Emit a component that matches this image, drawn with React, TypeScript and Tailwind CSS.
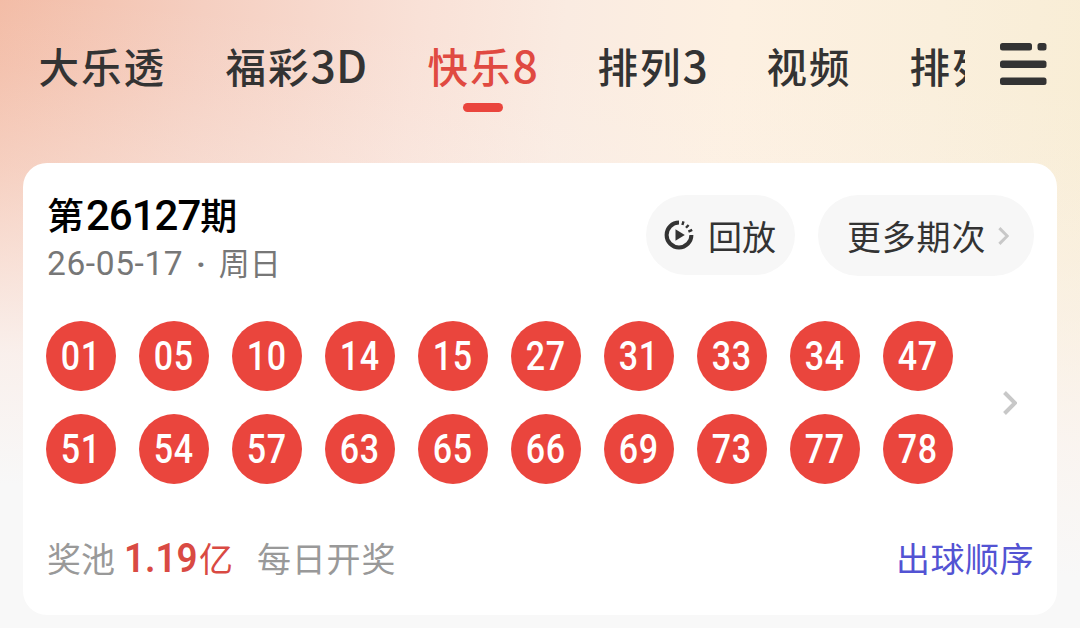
import type { ReactNode } from 'react';

const TABS: { cn: string; latin?: string; width: string; active?: boolean }[] = [
  { cn: '大乐透', width: 'w-[187px]' },
  { cn: '福彩', latin: '3D', width: 'w-[202px]' },
  { cn: '快乐', latin: '8', width: 'w-[170px]', active: true },
  { cn: '排列', latin: '3', width: 'w-[169px]' },
  { cn: '视频', width: 'w-[143px]' },
  { cn: '排列', latin: '5', width: 'w-[170px]' },
];

const ROWS = [
  ['01', '05', '10', '14', '15', '27', '31', '33', '34', '47'],
  ['51', '54', '57', '63', '65', '66', '69', '73', '77', '78'],
];

const MenuIcon = () => (
  <svg width="48" height="44" viewBox="0 0 48 44" fill="#333333">
    <rect x="0" y="0" width="32" height="7.5" rx="2.5" />
    <rect x="37.5" y="0" width="9" height="7.5" rx="2.5" />
    <rect x="0" y="17.5" width="46.5" height="7.5" rx="2.5" />
    <rect x="0" y="34.5" width="46.5" height="7.5" rx="2.5" />
  </svg>
);

const ReplayIcon = () => (
  <svg width="30" height="30" viewBox="0 0 30 30" fill="none" stroke="#333333">
    <path d="M15 2.6A12.4 12.4 0 1 0 27.4 15" strokeWidth="4" />
    <path d="M18.4 5L19.5 1.4M22 7.8L24.6 5M24.4 11.6L28.2 9.8" strokeWidth="2.4" />
    <path d="M11.5 9.2V20.8L20.8 15Z" fill="#333333" stroke="none" />
  </svg>
);

const Chevron = ({ className }: { className: string }) => (
  <svg className={className} viewBox="0 0 14 24" fill="none" stroke="#c8c8c8" strokeWidth="4">
    <path d="M1.5 1.5L12 12L1.5 22.5" />
  </svg>
);

const Ball = ({ children }: { children: ReactNode }) => (
  <span className="flex size-[70px] items-center justify-center rounded-full bg-[#ea453d] font-['Roboto',sans-serif] text-[40.5px] leading-none font-medium text-white">
    <span className="scale-x-[0.84] tracking-[0.8px]">{children}</span>
  </span>
);

const Header = () => (
  <header className="flex h-[163px] items-start">
    <nav className="flex h-full w-[965px] shrink-0 overflow-hidden pl-[38.5px]">
      {TABS.map((tab, i) => (
        <button
          key={i}
          className={`flex shrink-0 flex-col items-start pt-9 ${tab.width} ${
            tab.active ? 'text-[#e04a41]' : 'text-[#333333]'
          }`}
        >
          <span className="flex flex-col items-center">
            <span className="flex h-[60px] items-baseline text-[40.5px] leading-[60px] font-medium tracking-[2px] whitespace-nowrap">
              {tab.cn}
              {tab.latin && <span className="text-[44.5px] leading-none tracking-[0.2px]">{tab.latin}</span>}
            </span>
            {tab.active && <span className="mt-[7px] h-[9px] w-10 rounded-full bg-[#ea453d]" />}
          </span>
        </button>
      ))}
    </nav>
    <button className="mt-[43px] ml-[35px]">
      <MenuIcon />
    </button>
  </header>
);

const App = () => {
  return (
    <div className="h-[628px] w-[1080px] overflow-hidden bg-[#f8f8f8] bg-[linear-gradient(185deg,rgba(251,244,241,0)_12%,rgba(251,244,241,0.1)_22%,rgba(251,244,241,0.33)_36%,rgba(251,244,241,0.6)_48%,rgba(250,245,243,0.9)_62%,#f8f8f8_80%),linear-gradient(95deg,#f3bca6_0%,#f5cfc1_18%,#f9e1d7_37%,#faebe1_50%,#fdf0e1_65%,#faefdc_83%,#f8edd4_100%)] font-['Noto_Sans_CJK_SC',sans-serif]">
      <Header />
      <main className="mx-[23px] flex h-[452px] flex-col rounded-[24px] bg-white px-[23px]">
        <div className="flex h-[158px] items-start pt-8">
          <div className="flex-1 pl-px">
            <h1 className="flex h-[41px] items-baseline text-[37px] leading-[37px] font-medium text-black">
              第
              <span className="ml-[2px] font-['Roboto',sans-serif] text-[42px] leading-none tracking-[-1px]">
                26127
              </span>
              期
            </h1>
            <p className="mt-[9px] flex h-9 items-baseline text-[31px] leading-[34px] text-[#777777]">
              <span className="font-['Roboto',sans-serif] text-[33.5px] leading-none tracking-[0.6px]">26-05-17</span>
              <span className="mx-[13px] font-['Roboto',sans-serif] leading-none font-bold">·</span>
              周日
            </p>
          </div>
          <button className="flex h-20 w-[149px] items-center rounded-full bg-[#f7f7f7] pl-[18px] text-[34px] text-[#333333]">
            <ReplayIcon />
            <span className="ml-[14px]">回放</span>
          </button>
          <button className="ml-[23px] flex h-[81px] w-[216px] items-center rounded-full bg-[#f7f7f7] pl-[29px] text-[34px] tracking-[0.8px] text-[#333333]">
            更多期次
            <Chevron className="ml-3 h-[18px] w-[11px]" />
          </button>
        </div>

        <div className="flex h-[163px] items-center">
          <div className="flex flex-col gap-[23px]">
            {ROWS.map((row) => (
              <div key={row[0]} className="flex gap-[23px]">
                {row.map((n) => (
                  <Ball key={n}>{n}</Ball>
                ))}
              </div>
            ))}
          </div>
          <Chevron className="ml-[50px] h-6 w-[14px]" />
        </div>

        <div className="mt-[50px] flex h-12 items-baseline text-[34px] leading-[47px] text-[#999999]">
          <span className="ml-px">奖池</span>
          <span className="ml-[9px] w-[75px] origin-left scale-x-[0.92] font-['Roboto',sans-serif] text-[40px] leading-none font-semibold text-[#d94a43]">
            1.19
          </span>
          <span className="text-[#d94a43]">亿</span>
          <span className="ml-6 tracking-[0.8px]">每日开奖</span>
          <a className="ml-auto tracking-[0.5px] text-[#5353d3]">出球顺序</a>
        </div>
      </main>
    </div>
  );
};

export default App;
